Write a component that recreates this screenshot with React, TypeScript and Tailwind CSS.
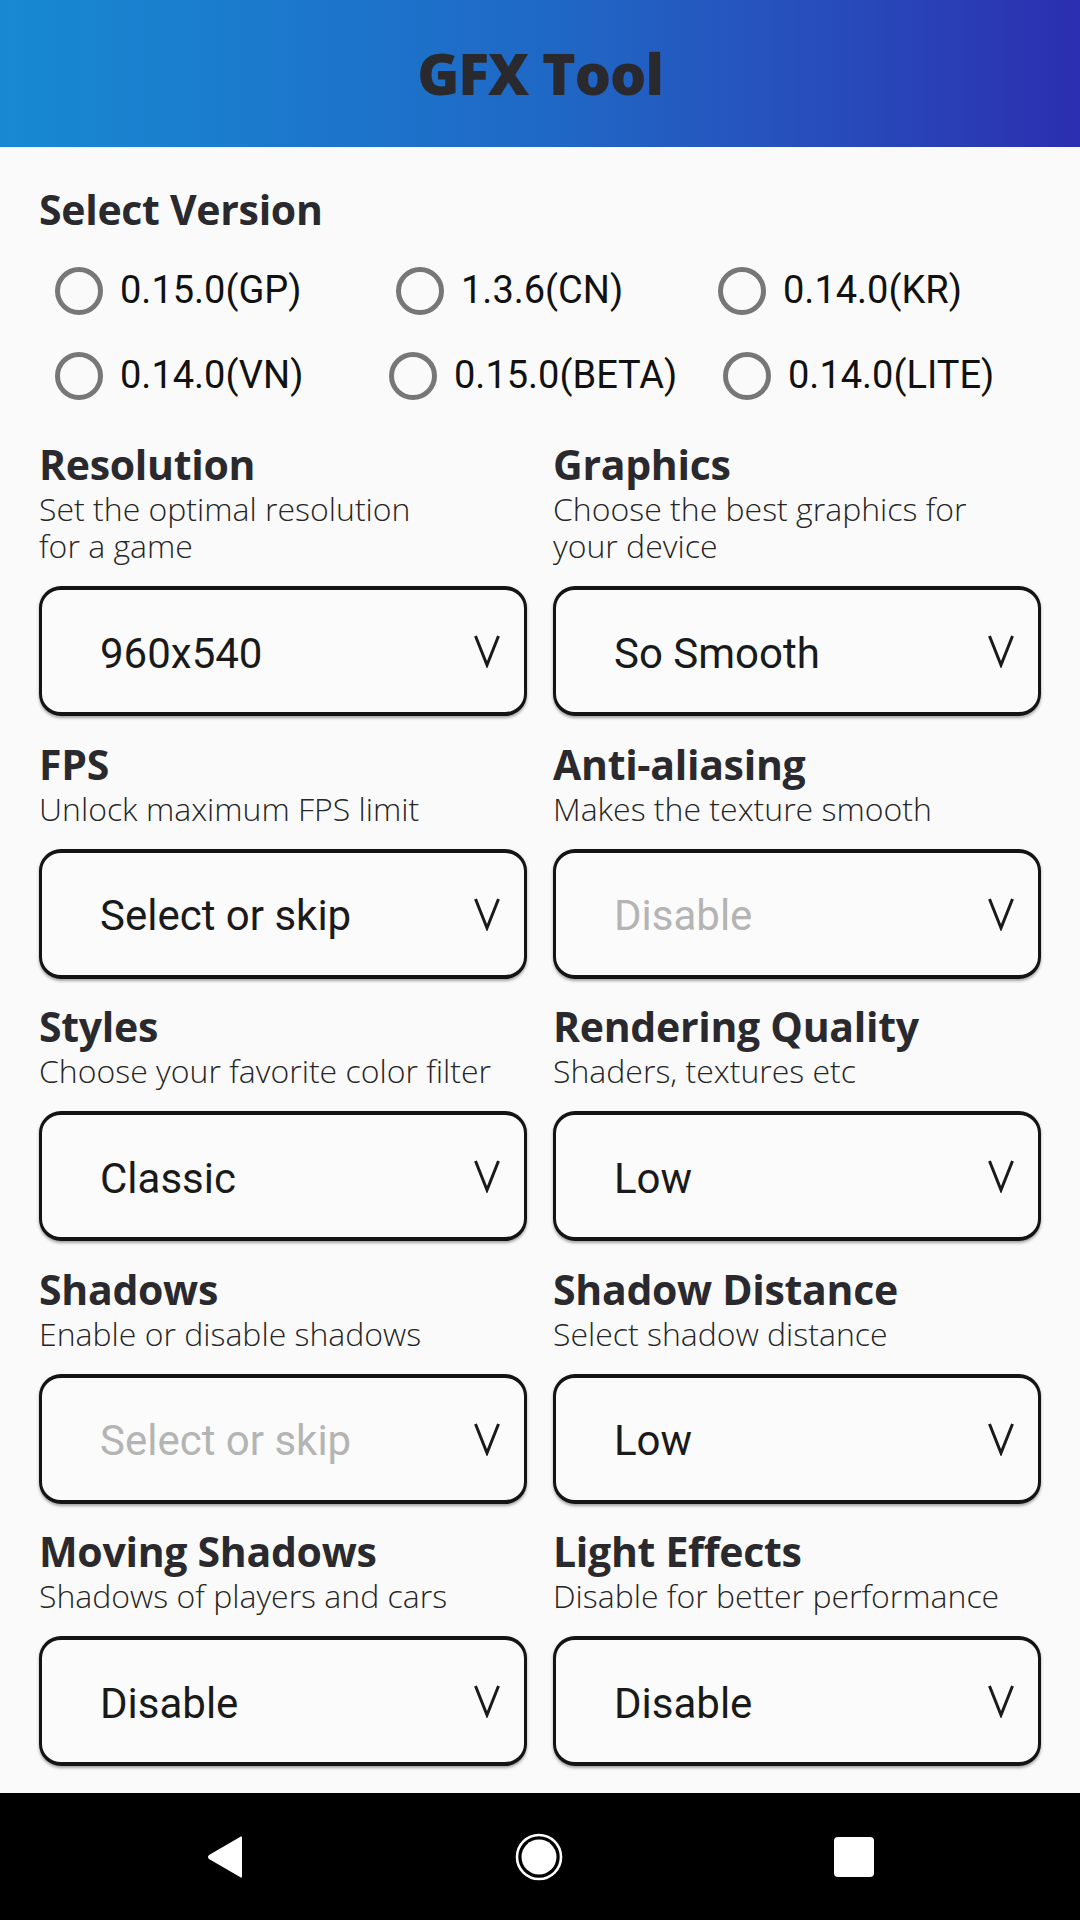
import React from 'react'

const VERSION_ROWS = [
    { items: ['0.15.0(GP)', '1.3.6(CN)', '0.14.0(KR)'], widths: ['w-[341px]', 'w-[322px]', ''] },
    { items: ['0.14.0(VN)', '0.15.0(BETA)', '0.14.0(LITE)'], widths: ['w-[334px]', 'w-[334px]', ''] },
]

const SETTINGS = [
    { title: 'Resolution', desc: ['Set the optimal resolution', 'for a game'], value: '960x540' },
    { title: 'Graphics', desc: ['Choose the best graphics for', 'your device'], value: 'So Smooth' },
    { title: 'FPS', desc: ['Unlock maximum FPS limit'], value: 'Select or skip' },
    { title: 'Anti-aliasing', desc: ['Makes the texture smooth'], value: 'Disable', placeholder: true },
    { title: 'Styles', desc: ['Choose your favorite color filter'], value: 'Classic' },
    { title: 'Rendering Quality', desc: ['Shaders, textures etc'], value: 'Low' },
    { title: 'Shadows', desc: ['Enable or disable shadows'], value: 'Select or skip', placeholder: true },
    { title: 'Shadow Distance', desc: ['Select shadow distance'], value: 'Low' },
    { title: 'Moving Shadows', desc: ['Shadows of players and cars'], value: 'Disable' },
    { title: 'Light Effects', desc: ['Disable for better performance'], value: 'Disable' },
]

function Radio({ label, width }: { label: string; width: string }) {
    return (
        <div className={`flex items-center gap-[17px] ${width}`}>
            <span className="w-[48px] h-[48px] rounded-full border-[5px] border-[#777777] shrink-0" />
            <span className="font-['Roboto',sans-serif] text-[38px] text-[#111111] whitespace-nowrap">{label}</span>
        </div>
    )
}

function Dropdown({ value, placeholder }: { value: string; placeholder?: boolean }) {
    return (
        <div className="h-[130px] mt-[22px] flex items-center justify-between pl-[58px] pr-[23px] rounded-[22px] border-x-[3px] border-t-[4px] border-b-[4px] border-[#141414] shadow-[0_2px_3px_rgba(0,0,0,0.35)] bg-[#fbfbfb]">
            <span className={`pt-[5px] font-['Roboto',sans-serif] text-[42px] leading-none ${placeholder ? 'text-[#b4b4b4]' : 'text-[#1a1a1a]'}`}>
                {value}
            </span>
            <svg width="28" height="34" viewBox="0 0 28 34" fill="none">
                <polyline points="2.5,2 14,31 25.5,2" stroke="#1a1a1a" strokeWidth="3" strokeLinejoin="miter" />
            </svg>
        </div>
    )
}

export default function App() {
    return (
        <div className="w-[1080px] h-[1920px] flex flex-col bg-[#fafafa]">
            {/* Header */}
            <header className="h-[147px] shrink-0 flex items-center justify-center bg-linear-to-r from-[#1789d2] via-[#1f69c6] to-[#2b2eb0]">
                <h1 className="font-['Open_Sans',sans-serif] font-extrabold text-[57px] leading-none text-[#2a2a2e] tracking-[-1px]">
                    GFX Tool
                </h1>
            </header>

            {/* Content */}
            <main className="flex-1 px-[39px] pt-[37px]">
                <h2 className="font-['Open_Sans',sans-serif] font-bold text-[41px] leading-[50px] text-[#2a2a2e] tracking-[-0.3px]">Select Version</h2>
                <div className="mt-[14px] pl-[16px]">
                    {VERSION_ROWS.map((row, i) => (
                        <div key={i} className="h-[85px] flex items-center">
                            {row.items.map((item, j) => (
                                <Radio key={item} label={item} width={row.widths[j]} />
                            ))}
                        </div>
                    ))}
                </div>

                <div className="mt-[21px] grid grid-cols-2 gap-x-[26px] gap-y-[22.5px]">
                    {SETTINGS.map((s) => (
                        <div key={s.title} className="flex flex-col">
                            <h3 className="font-['Open_Sans',sans-serif] font-bold text-[41px] leading-[50px] text-[#2a2a2e] tracking-[-0.3px] whitespace-nowrap">
                                {s.title}
                            </h3>
                            <div className="mt-[1px] font-['Open_Sans',sans-serif] font-light text-[32px] leading-[37px] text-[#262626] whitespace-nowrap">
                                {s.desc.map((line) => (
                                    <div key={line}>{line}</div>
                                ))}
                            </div>
                            <Dropdown value={s.value} placeholder={s.placeholder} />
                        </div>
                    ))}
                </div>
            </main>

            {/* Navigation bar */}
            <nav className="h-[127px] shrink-0 bg-black flex items-center justify-center gap-[271px]">
                <svg width="38" height="44" viewBox="0 0 38 44">
                    <path d="M36 3 L36 41 Q36 44 34 42 L3 24 Q1 22 3 20 L34 2 Q36 0 36 3 Z" fill="white" />
                </svg>
                <svg width="48" height="48" viewBox="0 0 48 48">
                    <circle cx="24" cy="24" r="22" fill="none" stroke="white" strokeWidth="2.6" />
                    <circle cx="24" cy="24" r="17.5" fill="white" />
                </svg>
                <div className="w-[40px] h-[40px] rounded-[4px] bg-white" />
            </nav>
        </div>
    )
}
